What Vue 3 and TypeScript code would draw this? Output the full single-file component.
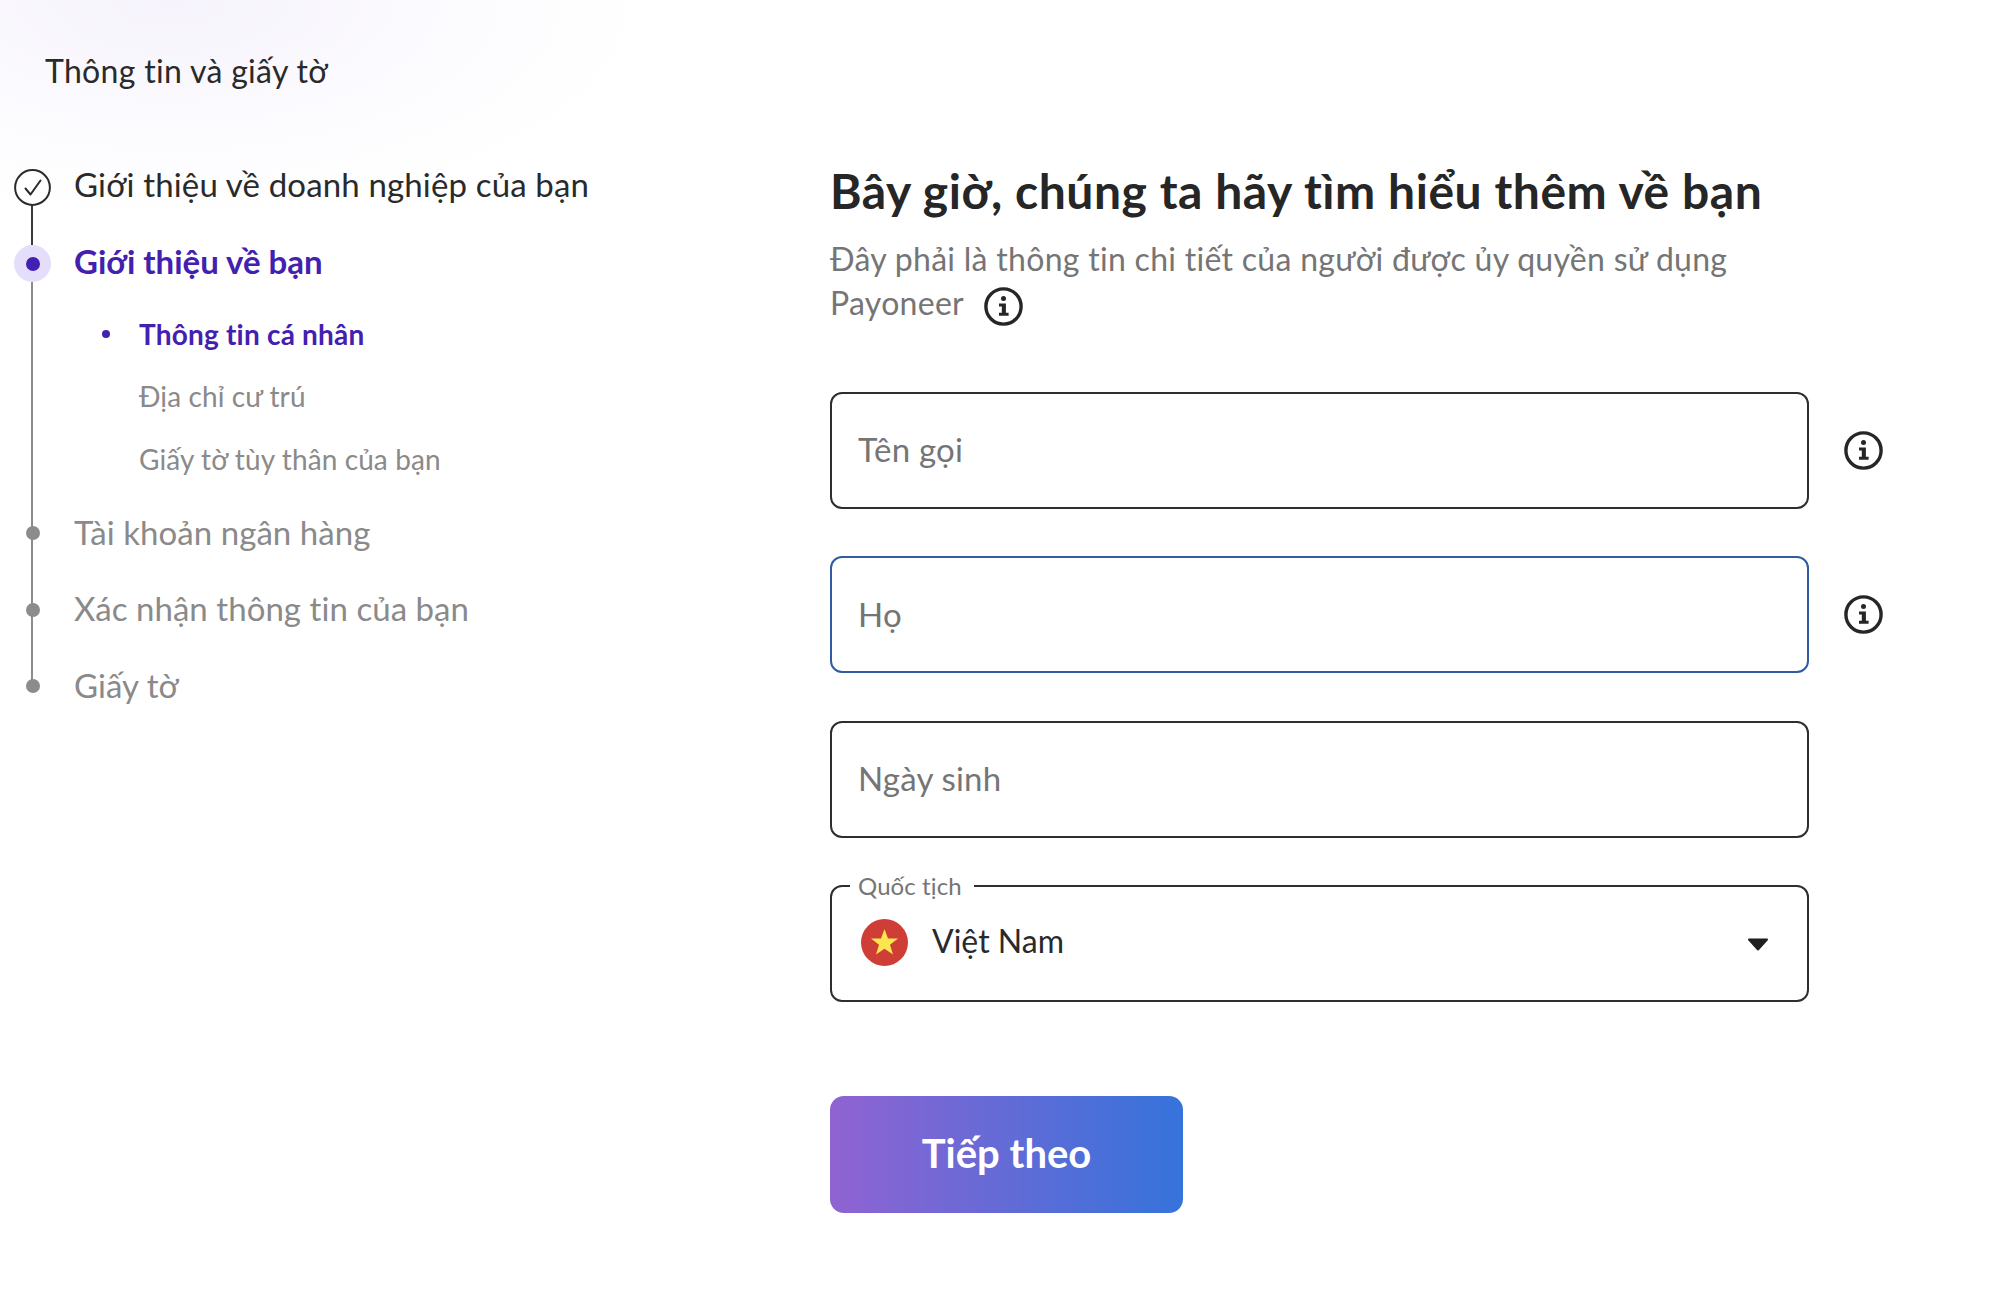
<script setup lang="ts">
interface Sub { label: string; active?: boolean }
const subs: Sub[] = [
  { label: 'Thông tin cá nhân', active: true },
  { label: 'Địa chỉ cư trú' },
  { label: 'Giấy tờ tùy thân của bạn' },
]
const later: string[] = ['Tài khoản ngân hàng', 'Xác nhận thông tin của bạn', 'Giấy tờ']
const fields = [
  { label: 'Tên gọi', info: true, focus: false },
  { label: 'Họ', info: true, focus: true },
  { label: 'Ngày sinh', info: false, focus: false },
]
</script>

<template>
  <div class="page">
    <aside class="side">
      <div class="title">Thông tin và giấy tờ</div>
      <div class="stepper">
        <span class="line line-done"></span>
        <span class="line line-rest"></span>
        <div class="step step-done">
          <span class="marker">
            <svg class="check" viewBox="0 0 37 37" width="37" height="37">
              <circle cx="18.5" cy="18.5" r="17.4" fill="#fff" stroke="#2b2b2b" stroke-width="2" />
              <path d="M11.5 19.5 l5 6 L26.5 11.5" fill="none" stroke="#2b2b2b" stroke-width="2" stroke-linecap="round" stroke-linejoin="round" />
            </svg>
          </span>
          <span class="step-text">Giới thiệu về doanh nghiệp của bạn</span>
        </div>
        <div class="step step-active">
          <span class="marker"><span class="halo"><span class="core"></span></span></span>
          <span class="step-text">Giới thiệu về bạn</span>
        </div>
        <ul class="subs">
          <li v-for="s in subs" :key="s.label" class="sub" :class="{ 'sub-active': s.active }">{{ s.label }}</li>
        </ul>
        <div v-for="l in later" :key="l" class="step step-later">
          <span class="marker"><span class="dot"></span></span>
          <span class="step-text">{{ l }}</span>
        </div>
      </div>
    </aside>

    <main class="main">
      <h1 class="heading">Bây giờ, chúng ta hãy tìm hiểu thêm về bạn</h1>
      <p class="lead">
        Đây phải là thông tin chi tiết của người được ủy quyền sử dụng<br />
        Payoneer
        <svg class="info lead-info" viewBox="0 0 39 39" width="39" height="39">
          <circle cx="19.5" cy="19.5" r="17.6" fill="none" stroke="#262626" stroke-width="3.4" />
          <circle cx="19.5" cy="11.6" r="2.5" fill="#262626" />
          <path d="M15 16.4h6.9v9.4h2.7v3h-9.6v-3h2.8v-6.4H15z" fill="#262626" />
        </svg>
      </p>

      <div class="fields">
        <div v-for="f in fields" :key="f.label" class="row">
          <div class="box" :class="{ focus: f.focus }">
            <span class="placeholder">{{ f.label }}</span>
          </div>
          <svg v-if="f.info" class="info" viewBox="0 0 39 39" width="39" height="39">
            <circle cx="19.5" cy="19.5" r="17.6" fill="none" stroke="#262626" stroke-width="3.4" />
            <circle cx="19.5" cy="11.6" r="2.5" fill="#262626" />
            <path d="M15 16.4h6.9v9.4h2.7v3h-9.6v-3h2.8v-6.4H15z" fill="#262626" />
          </svg>
        </div>
        <div class="row">
          <div class="box select">
            <span class="float-label">Quốc tịch</span>
            <svg class="flag" viewBox="0 0 47 47" width="47" height="47">
              <circle cx="23.5" cy="23.5" r="23.5" fill="#cf3d37" />
              <polygon points="23.5,10 27,19.6 37,19.6 29,25.8 32,35.5 23.5,29.7 15,35.5 18,25.8 10,19.6 20,19.6" fill="#fbe64f" />
            </svg>
            <span class="value">Việt Nam</span>
            <svg class="caret" viewBox="0 0 22 13" width="22" height="13">
              <path d="M2 1.5h18L11 11.5z" fill="#1f1f1f" stroke="#1f1f1f" stroke-width="2" stroke-linejoin="round" />
            </svg>
          </div>
        </div>
      </div>

      <button class="next" type="button">Tiếp theo</button>
    </main>
  </div>
</template>

<style>
html, body { margin: 0; background: #fff; }
</style>

<style scoped>
.page {
  display: flex;
  width: 1999px;
  height: 1310px;
  overflow: hidden;
  font-family: Lato, "Noto Sans", sans-serif;
  color: #2a2a2a;
  background:
    radial-gradient(ellipse 480px 220px at 170px 0px, #f6f3fc 0%, #fbfafe 50%, rgba(255,255,255,0) 100%),
    #fff;
}
.side { width: 830px; flex: none; padding-top: 51px; box-sizing: border-box; }
.title { margin-left: 45px; font-size: 32px; line-height: 40px; letter-spacing: 0.32px; }
.stepper { position: relative; margin-top: 76px; }
.line { position: absolute; left: 31px; width: 2px; }
.line-done { top: 38px; height: 40px; background: #3a3a3a; }
.line-rest { top: 115px; height: 404px; background: #8c8c8c; }
.step {
  position: relative;
  display: flex;
  align-items: center;
  height: 40px;
  font-size: 33px;
  letter-spacing: 0.15px;
}
.step + .step { margin-top: 36.5px; }
.step-done .step-text { margin-top: -6px; }
.step-active .step-text { margin-top: -6px; }
.step-later .step-text { margin-top: -2px; }
.marker {
  flex: none;
  width: 74px;
  padding-left: 14px;
  box-sizing: border-box;
  display: flex;
  align-items: center;
}
.marker > * { flex: none; }
.check { display: block; width: 37px; height: 37px; }
.halo {
  width: 37px;
  height: 37px;
  border-radius: 50%;
  background: #e4defa;
  display: flex;
  align-items: center;
  justify-content: center;
}
.core { width: 14px; height: 14px; border-radius: 50%; background: #4320b4; }
.dot { width: 14px; height: 14px; margin-left: 11.5px; margin-top: 1px; border-radius: 50%; background: #8c8c8c; }
.step-active .step-text { color: #4320b0; font-weight: 700; letter-spacing: 0; }
.step-later { color: #8a8a8a; letter-spacing: 0.05px; }
.subs { list-style: none; margin: 30px 0 34px; padding: 0 0 0 139px; }
.sub {
  position: relative;
  height: 40px;
  line-height: 40px;
  font-size: 28px;
  letter-spacing: 0.1px;
  color: #8a8a8a;
}
.sub + .sub { margin-top: 22.5px; }
.sub-active { color: #4320b0; font-weight: 700; letter-spacing: 0.2px; }
.sub-active::before {
  content: "";
  position: absolute;
  left: -37px;
  top: 16px;
  width: 8px;
  height: 8px;
  border-radius: 50%;
  background: #4320b0;
}
.main { flex: 1; padding-top: 161px; min-width: 0; }
.heading { margin: 0; font-size: 48px; line-height: 60px; font-weight: 700; letter-spacing: 0.55px; color: #262626; }
.lead { margin: 16px 0 0; font-size: 32px; line-height: 44px; letter-spacing: 0.29px; color: #757575; }
.fields { margin-top: 65.5px; display: flex; flex-direction: column; gap: 47.5px; }
.row { display: flex; align-items: center; }
.box {
  position: relative;
  width: 979px;
  height: 117px;
  box-sizing: border-box;
  border: 2px solid #2e2e2e;
  border-radius: 12px;
  background: #fff;
  padding: 0 26px;
  display: flex;
  align-items: center;
}
.box.focus { border-color: #2f5ca3; }
.placeholder { font-size: 33px; letter-spacing: 0.2px; color: #757575; margin-top: -2px; }
.info { flex: none; margin-left: 35px; display: inline-block; }
.lead-info { margin-left: 12px; vertical-align: -11px; }
.select { padding: 0 38px 0 29px; }
.float-label {
  position: absolute;
  left: 18px;
  top: -16px;
  padding: 0 12px 0 8px;
  background: #fff;
  font-size: 24px;
  line-height: 30px;
  letter-spacing: 0.1px;
  color: #757575;
}
.flag { flex: none; margin-right: 24px; margin-top: -2px; }
.value { font-size: 32px; color: #2a2a2a; flex: 1; margin-top: -6px; }
.caret { flex: none; margin-top: 2px; }
.next {
  display: block;
  margin-top: 94px;
  padding: 0 0 3px;
  width: 353px;
  height: 117px;
  border: 0;
  border-radius: 14px;
  background: linear-gradient(90deg, #9063d2 0%, #3573db 100%);
  color: #fff;
  font-family: inherit;
  font-size: 40px;
  font-weight: 700;
}
</style>
